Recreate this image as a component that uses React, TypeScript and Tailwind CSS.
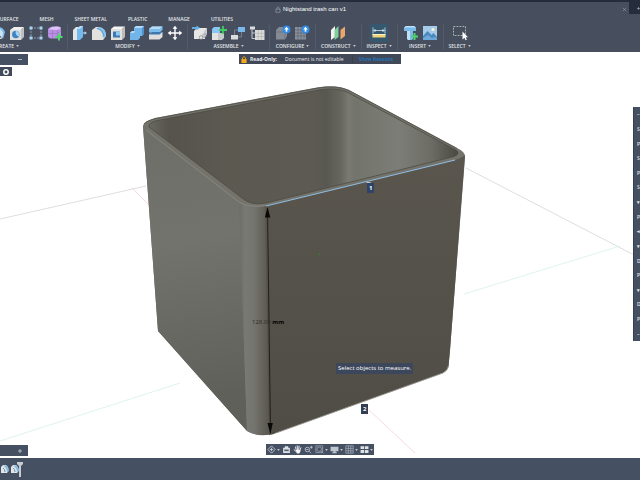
import type { ReactNode } from 'react';

interface ToolGroup {
  label: string;
  className: string;
  tools: { name: string; icon: ReactNode; active?: boolean }[];
}

const TABS = ['SURFACE', 'MESH', 'SHEET METAL', 'PLASTIC', 'MANAGE', 'UTILITIES'];

function Caret() {
  return (
    <svg viewBox="0 0 4 3" className="h-[2px] w-[3px] shrink-0" fill="#c3c8d0" aria-hidden="true">
      <path d="M0 0h4L2 3z" />
    </svg>
  );
}

function Icon({ children }: { children: ReactNode }) {
  return (
    <svg viewBox="0 0 16 16" className="size-4" fill="none" aria-hidden="true">
      {children}
    </svg>
  );
}

// Blue disc with an upward arrow, used on the configuration tools
function UpBadge() {
  return (
    <>
      <circle cx="11.5" cy="4.5" r="4" fill="#2f8be6" />
      <path d="M11.5 1.8l2.3 2.6h-1.5v2.4h-1.6V4.4H9.2z" fill="#fff" />
    </>
  );
}

const GROUPS: ToolGroup[] = [
  {
    label: 'CREATE',
    className: '-ml-[52px] px-1',
    tools: [
      { name: 'New sketch', icon: <Icon><path d="M2 3h12v11H2z" fill="#c9d3de" /></Icon> },
      { name: 'Extrude', icon: <Icon><path d="M2 5l4-3h8v9l-4 3H2z" fill="#d8dadc" /></Icon> },
      {
        name: 'Revolve',
        icon: (
          <Icon>
            <path d="M4 3q8-3 11 4l-2 7q-3-6-8-5z" fill="#7fc0ee" />
            <path d="M4 3q7-1 9 5l-1 6q-2-6-7-5z" fill="#cfe3f2" />
            <path d="M4 10q5 0 8 4H4z" fill="#e5e5e2" />
          </Icon>
        ),
      },
      {
        name: 'Hole',
        icon: (
          <Icon>
            <path d="M1 5l4-3h10l-3 3z" fill="#f0f0ee" />
            <path d="M1 5h11v10H1z" fill="#dededb" />
            <path d="M12 5l3-3v10l-3 3z" fill="#bfc0bf" />
            <circle cx="6.8" cy="9.5" r="3.7" fill="#3e84c4" />
            <path d="M6.8 5.800a3.700 3.700 0 013 5.700q-4-1-3-5.700z" fill="#a6d4f5" />
          </Icon>
        ),
      },
      {
        name: 'Pattern',
        icon: (
          <Icon>
            <path d="M3 3h10M3 13h10M3 3v10M13 3v10" stroke="#9bb0c5" strokeWidth=".8" strokeDasharray="2 1" />
            <path d="M1.500 1.500h3v3h-3zM11.500 1.500h3v3h-3zM1.500 11.500h3v3h-3zM11.500 11.500h3v3h-3z" fill="#a9d3f2" />
          </Icon>
        ),
      },
      {
        name: 'Create form',
        icon: (
          <Icon>
            <path d="M1 4.500q0-1.500 4-3h6q3 0 3 2v7q-1 3-4 3H4q-3 0-3-3z" fill="#b990e2" />
            <path d="M1.500 4.500q3-3 8-3 4 0 4 1.500l-3 2z" fill="#dfc4f6" />
            <path d="M1.300 8.500H10l4-2.500M5.500 5v8.500M10.300 5v8.500" stroke="#9169bb" strokeWidth=".5" />
            <path d="M12 8.500v7M8.500 12h7" stroke="#4fd66c" strokeWidth="2" />
          </Icon>
        ),
      },
    ],
  },
  {
    label: 'MODIFY',
    className: 'px-1',
    tools: [
      {
        name: 'Press pull',
        icon: (
          <Icon>
            <path d="M1 5l3-3h4v12l-3 1H1z" fill="#e4e5e4" />
            <path d="M5 4l3-3h3v11l-3 3H5z" fill="#74b9ee" />
            <path d="M5 4l3-3h3L8 4z" fill="#b5dcf8" />
            <path d="M11 8h2" stroke="#cfe8fa" />
            <path d="M12.500 6.300L15 8l-2.500 1.700z" fill="#a8d4f5" />
          </Icon>
        ),
      },
      {
        name: 'Fillet',
        icon: (
          <Icon>
            <path d="M1 5l4-3h3q7 1 7 9l-3 4H1z" fill="#e2e1de" />
            <path d="M5 3.500L8 2q7 1 7 9l-3 2q0-8-7-9.500z" fill="#86c2ee" />
            <path d="M6 3.500q6 1 7 8" stroke="#4d8dc5" strokeWidth=".7" />
          </Icon>
        ),
      },
      {
        name: 'Shell',
        icon: (
          <Icon>
            <path d="M1 4l3-2.500h11L12 4z" fill="#f5f5f3" />
            <path d="M1 4h11v11H1z" fill="#e3e1de" />
            <path d="M12 4l3-2.500V12l-3 3z" fill="#bdbcb9" />
            <path d="M3 6.500h7v6H3z" fill="#3a78b5" />
            <path d="M6 6.500h4v4H6z" fill="#8fcaf4" />
          </Icon>
        ),
      },
      {
        name: 'Combine',
        icon: (
          <Icon>
            <path d="M1 8l2-2h2V3l2-2h8v8l-2 2h-2v2l-2 2H1z" fill="#72b5ea" />
            <path d="M5 3l2-2h8l-2 2zM1 8l2-2h3L5 8z" fill="#b3dbf8" />
            <path d="M13 3l2-2v8l-2 2z" fill="#4c93cf" />
          </Icon>
        ),
      },
      {
        name: 'Split body',
        icon: (
          <Icon>
            <path d="M1 4l3-2.500h10.500V5l-3 2.500H1z" fill="#7dbdee" />
            <path d="M1 4l3-2.500h10.500L11.500 4z" fill="#b7ddf8" />
            <path d="M1 9.500L4 7h10.500v5l-3 2.500H1z" fill="#dededc" />
            <path d="M1 9.500L4 7h10.500l-3 2.500z" fill="#3d79b0" />
          </Icon>
        ),
      },
      {
        name: 'Move',
        icon: (
          <Icon>
            <path d="M8 2.500v11M2.500 8h11" stroke="#fff" strokeWidth="1.400" />
            <path d="M8 .8l2.400 3H5.600zM8 15.200l2.400-3H5.600zM.8 8l3-2.400v4.800zM15.200 8l-3-2.400v4.800z" fill="#fff" />
          </Icon>
        ),
      },
    ],
  },
  {
    label: 'ASSEMBLE',
    className: 'px-1',
    tools: [
      {
        name: 'New component',
        icon: (
          <Icon>
            <path d="M2 6l3-3h10l-2 3v8H2z" fill="#e7e7e5" />
            <path d="M12 6l3-3v6l-3 5z" fill="#c9cccf" />
            <path d="M0 3h5" stroke="#67b5ee" strokeWidth="1.800" />
            <path d="M4.500 .5L8 3 4.500 5.500z" fill="#67b5ee" />
            <circle cx="9" cy="12.500" r="1.800" stroke="#8b929a" strokeWidth=".8" />
            <circle cx="12.500" cy="10.500" r="1.800" stroke="#8b929a" strokeWidth=".8" />
          </Icon>
        ),
      },
      {
        name: 'Insert component',
        icon: (
          <Icon>
            <path d="M1 4l2-2h6v6H1z" fill="#8bc6f2" />
            <path d="M1 8h6v7H1z" fill="#e3e3e0" />
            <path d="M7 8h6v5l-2 2H7z" fill="#c6c9cb" />
            <path d="M12 1v8M8 5h8" stroke="#3fcb5f" strokeWidth="1.800" />
          </Icon>
        ),
      },
      {
        name: 'Joint',
        icon: (
          <Icon>
            <path d="M8 2h7v5H8z" fill="#79b8ea" />
            <path d="M1 10h7v4.500H1z" fill="#dcdddd" />
            <path d="M4.500 10V5H8M11.500 7v5H8" stroke="#8a96a6" strokeWidth=".7" />
          </Icon>
        ),
      },
      {
        name: 'Bill of materials',
        icon: (
          <Icon>
            <path d="M1 1.500h5v3H1z" fill="#d9dde1" />
            <path d="M3 4v9.500h3M3 8h3" stroke="#c4cad2" />
            <path d="M6 5h9.500v10H6z" fill="#dcdcd8" />
            <path d="M6 8.300h9.500M6 11.600h9.500M9.200 5v10M12.400 5v10" stroke="#a3a8af" strokeWidth=".5" />
          </Icon>
        ),
      },
    ],
  },
  {
    label: 'CONFIGURE',
    className: 'px-[5px]',
    tools: [
      {
        name: 'Configure',
        icon: (
          <Icon>
            <path d="M1 5l3-3h8v9l-2 3.500H1z" fill="#858b94" />
            <path d="M1 7h9M10 7v7" stroke="#666e7b" strokeWidth=".7" />
            <UpBadge />
          </Icon>
        ),
      },
      {
        name: 'Configuration table',
        icon: (
          <Icon>
            <path d="M1 2h11v12.500H1z" fill="#8c929b" />
            <path d="M1 5h11M1 8h11M1 11h11M4 2v12M7 2v12M10 2v12" stroke="#596271" strokeWidth=".7" />
            <UpBadge />
          </Icon>
        ),
      },
    ],
  },
  {
    label: 'CONSTRUCT',
    className: 'px-[5px]',
    tools: [
      {
        name: 'Offset plane',
        icon: (
          <Icon>
            <path d="M1 5l4-4v11l-4 3z" fill="#f1f1ee" />
            <path d="M4.500 5l4-4v11l-4 3z" fill="#7fce9b" />
            <path d="M10.500 5L15 1.500V11l-4.500 3.500z" fill="#eda56c" />
          </Icon>
        ),
      },
    ],
  },
  {
    label: 'INSPECT',
    className: 'px-[5px]',
    tools: [
      {
        name: 'Measure',
        active: true,
        icon: (
          <Icon>
            <path d="M2 2.500v6M14 2.500v6M3 5.500h10" stroke="#d9e5ee" strokeWidth=".8" />
            <path d="M2 5.500L4.500 4v3zM14 5.500L11.500 4v3z" fill="#d9e5ee" />
            <path d="M1.500 9h13v3.500h-13z" fill="#f0d37d" />
            <path d="M1.500 9h13v1h-13z" fill="#fff2c5" />
          </Icon>
        ),
      },
    ],
  },
  {
    label: 'INSERT',
    className: 'px-[5px]',
    tools: [
      {
        name: 'Insert fastener',
        icon: (
          <Icon>
            <path d="M1 2.500L3 1h8l2 1.500V6H10v8l-1.500 1h-3L4 14V6H1z" fill="#7bbbec" />
            <path d="M1 2.500L3 1h8l2 1.500zM4 6h3v9H5.500L4 14z" fill="#c0e0f7" />
            <path d="M11.500 8v7M8 11.500h7" stroke="#52d171" strokeWidth="2" />
          </Icon>
        ),
      },
      {
        name: 'Insert canvas',
        icon: (
          <Icon>
            <path d="M1 1h14v14H1z" fill="#a6cbe9" />
            <path d="M1 11l4.500-5 4 4 2-2 3.500 4v3H1z" fill="#4a89bf" />
            <path d="M1 13l5-3 4 3 3-1 2 1v2H1z" fill="#6da9d8" />
            <circle cx="11" cy="4.500" r="1.500" fill="#fff5d7" />
          </Icon>
        ),
      },
    ],
  },
  {
    label: 'SELECT',
    className: 'border-transparent px-[5px]',
    tools: [
      {
        name: 'Window selection',
        icon: (
          <Icon>
            <path d="M1.500 1.500h12v9h-12z" stroke="#bfd7c8" strokeWidth=".8" strokeDasharray="1.800 1.200" />
            <path d="M10.500 6.500v8l2-1.800 1 2.600 1.300-.6-1.100-2.400h2.300z" fill="#fff" />
          </Icon>
        ),
      },
    ],
  },
];

const NAV_TOOLS: { name: string; caret: boolean; icon: ReactNode }[] = [
  {
    name: 'Orbit',
    caret: true,
    icon: (
      <g stroke="#dde1e6" strokeWidth="1.300">
        <path d="M8 1.500L14.500 8 8 14.500 1.500 8z" />
        <path d="M5 8h6M8 5v6" />
      </g>
    ),
  },
  {
    name: 'Look at',
    caret: false,
    icon: (
      <>
        <path d="M2 5h12v9H2zM5 2h6v3H5z" fill="#dde1e6" />
        <path d="M4 8h8v3H4z" fill="#596477" />
      </>
    ),
  },
  {
    name: 'Pan',
    caret: false,
    icon: (
      <>
        <path d="M5 9h8v3l-2 3H7z" fill="#f4f5f6" />
        <path d="M6 10L4.500 3.500M8 9.500L7.500 1.500M10 9.500l.8-7.500M12 10l2-5M6.500 12.500L2 8.500" stroke="#f4f5f6" strokeWidth="1.700" strokeLinecap="round" />
      </>
    ),
  },
  {
    name: 'Zoom',
    caret: false,
    icon: (
      <g stroke="#c9ced6" strokeWidth="1.400">
        <circle cx="6" cy="8" r="4" />
        <path d="M9 11l3.500 3.500M4 8h4M13 1.500v5M10.500 4h5" />
      </g>
    ),
  },
  {
    name: 'Fit',
    caret: true,
    icon: (
      <g stroke="#a4acb8" strokeWidth="1.300">
        <path d="M1.500 1.500h12v12h-12z" />
        <circle cx="7.500" cy="7.500" r="4" />
        <path d="M10.500 10.500L15 15" />
      </g>
    ),
  },
  {
    name: 'Display settings',
    caret: true,
    icon: <path d="M1 3h14v8H1zM6 11h4v2h2v1.500H4V13h2z" fill="#bfc6d0" />,
  },
  {
    name: 'Grid and snaps',
    caret: true,
    icon: (
      <path d="M1.500 1.500h13v13h-13zM1.500 6h13M1.500 10.300h13M6 1.500v13M10.300 1.500v13" stroke="#9fa9b5" strokeWidth="1.400" />
    ),
  },
  {
    name: 'Viewports',
    caret: true,
    icon: <path d="M1 2h6.300v5.300H1zM8.700 2H15v5.300H8.700zM1 8.700h6.300V14H1zM8.700 8.700H15V14H8.700z" fill="#dfe3e8" />,
  },
];

function TitleBar() {
  return (
    <div className="flex h-[14px] border-t-2 border-[#252d3d]">
      <div className="flex flex-1 items-center pt-[2px] pr-[2px]">
        <div className="flex flex-1 items-center justify-center gap-[2px] font-['Liberation_Sans',sans-serif] text-[6px] leading-[8px] text-white">
          <svg viewBox="0 0 8 10" className="h-[7px] w-[6px]" fill="none" stroke="#9299a4" aria-hidden="true">
            <path d="M1 4.500h6V9H1zM2.300 4.500V2.700Q4-.3 5.700 2.700v1.800" />
          </svg>
          <h1>Nightstand trash can v1</h1>
        </div>
        <button type="button" aria-label="Close tab" className="flex size-[6px] items-center justify-center">
          <svg viewBox="0 0 6 6" className="size-[5px]" stroke="#9299a4" strokeWidth=".8" aria-hidden="true">
            <path d="M1 1l4 4M5 1L1 5" />
          </svg>
        </button>
      </div>
      <button type="button" aria-label="New tab" className="flex w-[11px] items-center justify-end bg-[#252d3d]">
        <svg viewBox="0 0 4 4" className="size-[3px]" stroke="#9299a4" aria-hidden="true">
          <path d="M0 2h4M2 0v4" />
        </svg>
      </button>
    </div>
  );
}

function Ribbon() {
  return (
    <>
      <nav className="-ml-[3px] flex h-[10px] items-center gap-[21px] text-[5px] leading-[6px] font-semibold text-[#e3e6ea]">
        {TABS.map((tab) => (
          <a key={tab} href="#" className="whitespace-nowrap">
            {tab}
          </a>
        ))}
      </nav>
      <div className="flex h-7 items-start">
        {GROUPS.map((group) => (
          <div
            key={group.label}
            className={`flex shrink-0 flex-col items-center border-r border-[#525b6a] ${group.className}`}
          >
            <div className="flex gap-[3px]">
              {group.tools.map((tool) => (
                <button
                  key={tool.name}
                  type="button"
                  aria-label={tool.name}
                  className={tool.active ? 'bg-[#36586f] p-px' : 'py-px'}
                >
                  {tool.icon}
                </button>
              ))}
            </div>
            <button
              type="button"
              className="flex items-center gap-[2px] text-[5px] leading-[8px] font-semibold whitespace-nowrap text-[#e3e6ea]"
            >
              {group.label}
              <Caret />
            </button>
          </div>
        ))}
      </div>
    </>
  );
}

function Model() {
  return (
    <svg
      viewBox="0 52 640 406"
      preserveAspectRatio="xMidYMid slice"
      className="absolute inset-0 size-full"
      fill="none"
      role="img"
      aria-label="Trash can model"
    >
      <defs>
        <linearGradient id="inside" gradientUnits="userSpaceOnUse" x1="147" y1="0" x2="462" y2="0">
          <stop offset="0" stopColor="#6b6a63" />
          <stop offset=".07" stopColor="#55534c" />
          <stop offset=".25" stopColor="#5b5950" />
          <stop offset=".53" stopColor="#5c5a52" />
          <stop offset=".57" stopColor="#595850" />
          <stop offset=".615" stopColor="#66665f" />
          <stop offset=".64" stopColor="#7a7a73" />
          <stop offset=".66" stopColor="#73746c" />
          <stop offset=".8" stopColor="#7c7d76" />
          <stop offset=".9" stopColor="#6d6d66" />
          <stop offset="1" stopColor="#45443e" />
        </linearGradient>
        <linearGradient id="left" gradientUnits="userSpaceOnUse" x1="150" y1="140" x2="200" y2="400">
          <stop offset="0" stopColor="#6e6f69" />
          <stop offset=".4" stopColor="#72736d" />
          <stop offset="1" stopColor="#60605a" />
        </linearGradient>
        <linearGradient id="corner" x1="0" y1="0" x2="1" y2="0">
          <stop offset="0" stopColor="#6c6d66" />
          <stop offset=".2" stopColor="#787972" />
          <stop offset=".5" stopColor="#73746d" />
          <stop offset="1" stopColor="#57544c" />
        </linearGradient>
        <linearGradient id="right" x1="0" y1="0" x2="0" y2="1">
          <stop offset="0" stopColor="#5a564e" />
          <stop offset="1" stopColor="#4f4d46" />
        </linearGradient>
      </defs>

      {/* ground grid */}
      <path d="M0 219l146-33M466 168l174 90" stroke="#d5d5d5" strokeWidth=".8" />
      <path d="M0 441l180-58M464 294l156-48" stroke="#d6f0ee" strokeWidth=".8" />
      <path d="M369 410l46 43M132 188l20 20" stroke="#f4d2d4" strokeWidth=".8" />

      {/* outer shell */}
      <path d="M143 126Q144 121 155 118L317 87.500Q337 84 349 90L457 148Q466 152 465 158L450 350L448.500 366Q448 370 443 373L276 433Q259 438 247 431L158 331Z" fill="#73736b" />
      <path d="M143 126L158 331L247 431L239 202L147 131Z" fill="url(#left)" />
      <path d="M239 202Q250 208 266 206L270 434.500Q257 437 247 431Z" fill="url(#corner)" />
      <path d="M265 206L455 160Q465 157 465 154L450 350L448.500 366Q448 370 443 373L276 433Q272 435 269 435Z" fill="url(#right)" />
      <path d="M448.500 366Q448 370 443 373L276 433" stroke="#a09e97" strokeWidth=".9" />

      {/* opening */}
      <path d="M149 127Q148 123 157 120.500L319 90Q335 87 347 92L454 149Q462 153 454 156.500L266 203Q251 206 242 198Z" fill="url(#inside)" />
      <path d="M149 127Q148 123 157 120.500L319 90Q335 87 347 92L454 149Q462 153 454 156.500L266 203Q251 206 242 198Z" stroke="#484740" strokeWidth=".7" />
      <path d="M146 130L239 202Q249 208 266 205.500" stroke="#8d8c83" strokeWidth=".8" />
      <path d="M144 124Q146 121 156 118.500L318 88Q337 85 349 90.500L457 148.500" stroke="#55554e" strokeWidth=".9" />
      <path d="M266 206L455 160" stroke="#8fbbe0" strokeWidth="1.100" />

      {/* dimension line */}
      <path d="M267.500 208L270.500 433" stroke="#11110f" strokeWidth=".8" />
      <path d="M267.500 207l2.800 10.500h-5.400zM270.400 434l-2.900-11h5.300z" fill="#080808" />
      <path d="M318 255h3l-1.500-2z" fill="#397a35" />
      <path d="M366 182l5 .5.500 3z" fill="#e6f2fb" />
    </svg>
  );
}

function NavBar() {
  return (
    <div className="absolute bottom-[3px] left-1/2 flex h-[11px] -translate-x-1/2 items-center justify-between gap-[2px] bg-[#465063] px-px">
      {NAV_TOOLS.map((tool) => (
        <button key={tool.name} type="button" aria-label={tool.name} className="flex items-center gap-px">
          <svg viewBox="0 0 16 16" className="size-[9px]" fill="none" aria-hidden="true">
            {tool.icon}
          </svg>
          {tool.caret && <Caret />}
        </button>
      ))}
    </div>
  );
}

// Docked panel on the right edge, only its first few pixels are on screen
function MeasurePanel() {
  const rows = ['–', 'S', 'P', 'S', 'P', 'S', '▾', 'P', '◂', '▾', 'D', 'P', '▾', 'D', 'P', '–'];
  return (
    <aside className="absolute top-[55px] right-0 flex h-[234px] w-[7px] flex-col justify-around overflow-hidden border-l border-[#353f50] bg-[#465063] pl-[3px] text-[5px] leading-[6px] font-semibold text-[#e3e6ea]">
      {rows.map((row, i) => (
        <span key={i}>{row}</span>
      ))}
    </aside>
  );
}

function Timeline() {
  return (
    <footer className="flex h-[22px] items-center bg-[#465063]">
      {['Sketch', 'Extrude'].map((name) => (
        <button key={name} type="button" aria-label={name} className="mr-px">
          <svg viewBox="0 0 9 10" className="h-[10px] w-[9px]" aria-hidden="true">
            <path d="M1 3l2-2h3q3 2 2.500 6L7 9H1z" fill="#dfe5e8" />
            <path d="M3.500 1.500H6q3 2 2.500 6L7 8Q7 4 3.500 2z" fill="#83bce5" />
            <path d="M3 4q2 1 2 4" stroke="#567994" strokeWidth=".8" fill="none" />
          </svg>
        </button>
      ))}
      <svg viewBox="0 0 6 16" className="-ml-[3px] h-4 w-[6px]" aria-hidden="true">
        <path d="M0 1h6v2L4 5v11H2V5L0 3z" fill="#c6cbd1" />
      </svg>
    </footer>
  );
}

function App() {
  return (
    <div className="flex min-h-screen flex-col overflow-hidden bg-white font-['Open_Sans','Liberation_Sans',sans-serif]">
      <header className="bg-[#474f5e]">
        <TitleBar />
        <Ribbon />
      </header>

      <main className="relative flex-1">
        <Model />

        <div className="relative flex items-start justify-center pt-[2px]">
          <div className="flex h-[10px] items-center gap-[8px] bg-[#414858] px-[2px] text-[5px] leading-[8px] whitespace-nowrap text-[#eceef1]">
            <span className="flex items-center gap-[3px] font-bold">
              <svg viewBox="0 0 6 8" className="h-[7px] w-[6px]" aria-hidden="true">
                <path d="M0 3.500h6V8H0z" fill="#f5a91d" />
                <path d="M1.300 3.500V2Q3-.6 4.700 2v1.500" fill="none" stroke="#f5a91d" />
              </svg>
              Read-Only:
            </span>
            <span>Document is not editable</span>
            <a href="#" className="border-l border-[#373f4d] px-[6px] font-semibold text-[#1f7cc4]">
              Show Reasons
            </a>
          </div>
        </div>

        <div className="absolute top-[2px] left-0 flex flex-col items-start gap-[2px]">
          <button type="button" aria-label="Collapse browser" className="flex h-[11px] w-7 items-center justify-end bg-[#465063] pr-[6px]">
            <span className="h-px w-1 bg-[#aeb5bf]" />
          </button>
          <button type="button" aria-label="Root component" className="flex h-[9px] w-3 items-center justify-center bg-[#414a5a] pr-px">
            <svg viewBox="0 0 6 6" className="size-[6px]" fill="none" stroke="#fff" strokeWidth="1.500" aria-hidden="true">
              <circle cx="3" cy="3" r="2.200" />
            </svg>
          </button>
        </div>

        <button type="button" aria-label="Expand comments" className="absolute bottom-[2px] left-0 flex h-[11px] w-7 items-center justify-end bg-[#465063] pr-[6px]">
          <svg viewBox="0 0 4 4" className="size-1" stroke="#c9ced6" strokeWidth=".8" aria-hidden="true">
            <path d="M0 2h4M2 0v4" />
          </svg>
        </button>

        <span className="absolute top-[266px] left-[252px] text-[6px] leading-[8px] whitespace-nowrap text-[#2c2b27]">
          128.00 <b className="text-black">mm</b>
        </span>
        <span className="absolute top-[131px] left-[367px] bg-[#2d4468] px-[2px] text-[6px] leading-[10px] font-bold text-white">1</span>
        <span className="absolute top-[352px] left-[361px] bg-[#333e52] px-[2px] text-[6px] leading-[10px] font-bold text-white">2</span>
        <div className="absolute top-[311px] left-[336px] bg-[#3c475c] px-[2px] text-[6px] leading-[11px] whitespace-nowrap text-white">
          Select objects to measure.
        </div>

        <MeasurePanel />
        <NavBar />
      </main>

      <Timeline />
    </div>
  );
}

export default App;
